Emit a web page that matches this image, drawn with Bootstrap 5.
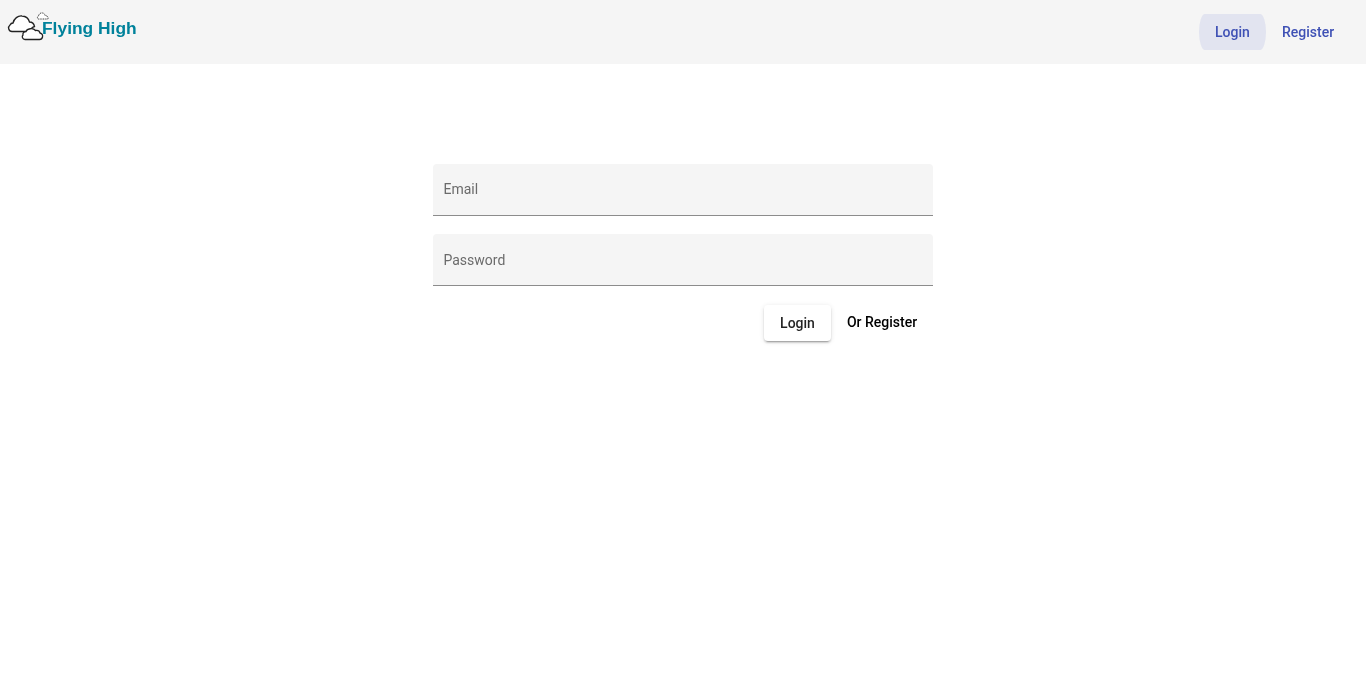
<!DOCTYPE html>
<html lang="en">

<head>
    <meta charset="UTF-8">
    <meta name="viewport" content="width=device-width, initial-scale=1.0">
    <title>Flying High</title>
    <link rel="stylesheet" href="https://cdn.jsdelivr.net/npm/bootstrap@5.3.0/dist/css/bootstrap.min.css">
    <style>
        body {
            font-family: Roboto, "Helvetica Neue", sans-serif;
            background: #fff;
        }

        .top-bar {
            height: 64px;
            background: #f5f5f5;
            padding: 0 16px 0 7px;
        }

        /* text in the reference is greyscale antialiased, a layer of its own gives that */
        .top-link,
        .brand-name,
        .login-form {
            will-change: transform;
        }

        .brand-logo {
            width: 132px;
            height: 32px;
            margin-top: 12px;
            text-decoration: none;
        }

        .brand-logo svg {
            width: 43px;
            height: 30px;
            flex: none;
        }

        .brand-name {
            font-family: "Liberation Sans", Arial, sans-serif;
            font-weight: 700;
            font-size: 17.4px;
            line-height: 1;
            color: #00829b;
            margin-top: 8px;
            margin-left: -8px;
            white-space: nowrap;
        }

        .top-link {
            height: 36px;
            margin-top: 14px;
            padding: 0 16px;
            font-size: 14px;
            font-weight: 500;
            line-height: 36px;
            color: #3f51b5;
            text-align: center;
            text-decoration: none;
        }

        .top-link.is-current {
            background: #e2e4f0;
            border-radius: 6px / 18px;
        }

        .login-form {
            width: 500px;
            margin: 100px auto 0;
        }

        .fill-field {
            height: 52px;
            margin-bottom: 18px;
            background: #f5f5f5;
            border: 0;
            border-bottom: 1px solid #8c8c8c;
            border-radius: 4px 4px 0 0;
            padding: 0 10.5px;
            font-size: 14px;
            color: #212529;
            box-shadow: none;
        }

        .fill-field.field-first {
            padding-bottom: 2px;
        }

        .fill-field::placeholder {
            color: #6b6b6b;
            opacity: 1;
        }

        .fill-field:focus {
            background: #f5f5f5;
            border-bottom-color: #3f51b5;
            box-shadow: none;
        }

        .form-actions {
            margin-top: 1px;
            padding-top: 1px;
            padding-bottom: 12px;
        }

        .raise-wrap {
            display: block;
            width: 67px;
            height: 36px;
            border-radius: 4px;
            background: #fff;
            box-shadow: 0 3px 1px -2px rgba(0, 0, 0, .2), 0 2px 2px 0 rgba(0, 0, 0, .14), 0 1px 5px 0 rgba(0, 0, 0, .12);
        }

        .btn-raised,
        .btn-raised:hover {
            width: 67px;
            height: 36px;
            padding: 0;
            background: transparent;
            border: 0;
            border-radius: 4px;
            font-size: 14px;
            font-weight: 500;
            color: rgba(0, 0, 0, .87);
        }

        .btn-plain {
            width: 102px;
            height: 36px;
            margin-top: -1px;
            padding: 0;
            font-size: 14px;
            font-weight: 500;
            line-height: 36px;
            color: #000;
            text-align: center;
            text-decoration: none;
        }
    </style>
</head>

<body>
    <header>
        <nav class="top-bar d-flex justify-content-between align-items-start">
            <a class="brand-logo d-flex align-items-start" href="#">
                <svg viewBox="0 0 43 30" fill="#fff" stroke="#222" stroke-width="1.3" aria-hidden="true">
                    <path d="M5 19.5C1.5 19.5.5 15 3 13c.5-1 2-2 3-2C7 6.500 11 3.500 15 4c4 .3 6.500 2.500 7.500 6 2.500 0 4.500 2 5 4.500-2 .5-3.500 2-4 5z"/>
                    <path d="M18 27.500c-2.500 0-3.500-3-2-4.500-.5-2 1-3.500 3-3.500 1-3 7-4 9.500-1 2.500-.5 4 .5 4.500 2.500 2 .5 3 2 2.500 4-.3 1.500-1.500 2.500-3 2.500z"/>
                    <path d="M31.500 7c-1.500-.5-1.500-2.500 0-3 .5-2 2-3.500 4-3 1.500 0 2.500 1.500 2.500 2.500 2 0 3.500 1.500 3 3.500z" stroke-width=".9" stroke-dasharray="1 .7"/>
                </svg>
                <span class="brand-name">Flying High</span>
            </a>
            <div class="d-flex">
                <a class="top-link is-current" href="#">Login</a>
                <a class="top-link" href="#">Register</a>
            </div>
        </nav>
    </header>

    <main>
        <form class="login-form">
            <input class="form-control fill-field field-first" type="email" placeholder="Email" aria-label="Email">
            <input class="form-control fill-field" type="password" placeholder="Password" aria-label="Password">
            <div class="form-actions d-flex justify-content-end">
                <span class="raise-wrap"><button class="btn btn-raised" type="button">Login</button></span>
                <a class="btn-plain" href="#">Or Register</a>
            </div>
        </form>
    </main>

    <script src="https://cdn.jsdelivr.net/npm/bootstrap@5.3.0/dist/js/bootstrap.bundle.min.js"></script>
</body>

</html>
